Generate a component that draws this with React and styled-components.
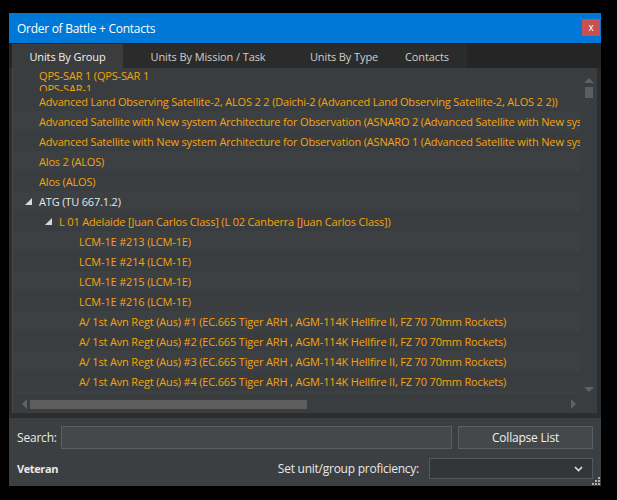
import React from "react";
import styled, { createGlobalStyle } from "styled-components";

const Global = createGlobalStyle`
  html, body { margin: 0; padding: 0; background: #000; }
  body { font-family: "Open Sans", "Noto Sans", sans-serif; }
`;

const Page = styled.div`
  width: 617px;
  height: 500px;
  padding: 13px 0 0 9px;
  box-sizing: border-box;
  background: #000;
`;

const Window = styled.div`
  position: relative;
  width: 592px;
  height: 473px;
  background: #2b2d2f;
  display: flex;
  flex-direction: column;
  font-family: "Open Sans", "Noto Sans", sans-serif;
  font-size: 11px;
`;

const TitleBar = styled.div`
  height: 30px;
  background: #0078d7;
  display: flex;
  align-items: center;
  justify-content: space-between;
  padding: 0 1px 0 8px;
  border-bottom: 1px solid #1e1e1e;
  color: #fff;
  font-size: 12px;
  letter-spacing: -0.28px;
`;

const CloseBtn = styled.div`
  width: 18px;
  height: 17px;
  background: #c75050;
  color: #fff;
  font-size: 10px;
  display: flex;
  align-items: center;
  justify-content: center;
  line-height: 1;
  margin-top: -2px;
  letter-spacing: 0;
`;

const TabStrip = styled.div`
  height: 24px;
  background: #252526;
  display: flex;
  padding-left: 3px;
`;

const Tab = styled.div`
  width: ${(p) => p.$w}px;
  display: flex;
  align-items: center;
  justify-content: center;
  background: ${(p) => (p.$active ? "#3a3c3e" : "#2b2b2b")};
  color: ${(p) => (p.$active ? "#f2f2f2" : "#cfcfcf")};
  font-size: 11px;
  letter-spacing: -0.1px;
  padding-right: ${(p) => p.$pr || 0}px;
  box-sizing: border-box;
`;

const Body = styled.div`
  padding: 0 4px 0 3px;
  height: 345px;
  display: flex;
`;

const ListPanel = styled.div`
  flex: 1;
  background: #3a3d40;
  border-left: 1px solid #484b4e;
  display: grid;
  grid-template-columns: 1fr 17px;
  grid-template-rows: 1fr 19px;
  overflow: hidden;
`;

const Viewport = styled.div`
  overflow: hidden;
  display: flex;
  flex-direction: column;
`;

const Row = styled.div`
  height: ${(p) => p.$h || 20}px;
  flex: none;
  display: flex;
  align-items: ${(p) => (p.$top ? "flex-start" : "center")};
  background: ${(p) => (p.$alt ? "#3d4043" : "#3a3d40")};
  padding-left: ${(p) => 26 + p.$level * 20}px;
  white-space: nowrap;
  overflow: hidden;
  color: ${(p) => (p.$white ? "#e6e6e6" : "#f5a30a")};
  font-size: 11px;
  letter-spacing: -0.17px;
`;

const Expander = styled.span`
  width: 14px;
  margin-left: -14px;
  display: inline-flex;
  align-items: center;
  justify-content: flex-start;
`;

const Label = styled.span`
  line-height: 13px;
`;

const TwoLine = styled.div`
  line-height: 13px;
  padding-top: 1px;
  white-space: nowrap;
`;

const VScroll = styled.div`
  display: flex;
  flex-direction: column;
  align-items: center;
  padding: 10px 0 0 0;
`;

const VThumb = styled.div`
  width: 8px;
  height: 11px;
  background: #5b5e61;
  margin-top: 4px;
`;

const Spacer = styled.div`
  flex: 1;
`;

const BottomPad = styled.div`
  height: 2px;
`;

const HScroll = styled.div`
  display: flex;
  align-items: center;
  padding: 1px 4px 0 9px;
  grid-column: 1 / 2;
`;

const HThumb = styled.div`
  width: 277px;
  height: 9px;
  background: #5d5d5d;
  margin-left: 3px;
`;

const Corner = styled.div``;

const Gap = styled.div`
  height: 5px;
  background: #2b2d2f;
`;

const BottomPanel = styled.div`
  flex: 1;
  background: #3c3f41;
  padding: 8px 8px 0 8px;
  display: flex;
  flex-direction: column;
  gap: 9px;
  color: #e8e8e8;
  font-size: 12px;
`;

const FormRow = styled.div`
  display: flex;
  align-items: center;
  height: ${(p) => p.$h}px;
`;

const FieldLabel = styled.span`
  width: 44px;
  font-size: 12px;
  letter-spacing: -0.2px;
`;

const Input = styled.div`
  width: 391px;
  height: 23px;
  box-sizing: border-box;
  background: #45484a;
  border: 1px solid #5c5f62;
`;

const Button = styled.div`
  margin-left: 6px;
  flex: 1;
  height: 23px;
  box-sizing: border-box;
  background: #45484a;
  border: 1px solid #5c5f62;
  display: flex;
  align-items: center;
  justify-content: center;
  color: #f0f0f0;
  font-size: 12px;
  letter-spacing: -0.2px;
`;

const Bold = styled.span`
  font-weight: 700;
  font-size: 11px;
  letter-spacing: -0.4px;
  flex: 1;
`;

const RightLabel = styled.span`
  margin-right: 10px;
  font-size: 12px;
  letter-spacing: -0.25px;
`;

const Select = styled.div`
  width: 164px;
  height: 21px;
  box-sizing: border-box;
  background: #333537;
  border: 1px solid #55585b;
  display: flex;
  align-items: center;
  justify-content: flex-end;
  padding-right: 9px;
`;

const Grip = styled.svg`
  position: absolute;
  right: 0;
  bottom: 0;
`;

const Tri = ({ dir, color = "#5f6265" }) => {
  const pts = {
    up: "0,5 5,0 10,5",
    down: "0,0 10,0 5,5",
    left: "5,0 5,10 0,5",
    right: "0,0 0,10 5,5",
  }[dir];
  const vertical = dir === "up" || dir === "down";
  return (
    <svg width={vertical ? 10 : 5} height={vertical ? 5 : 10}>
      <polygon points={pts} fill={color} />
    </svg>
  );
};

const ExpandIcon = () => (
  <Expander>
    <svg width="7" height="7">
      <polygon points="7,0 7,7 0,7" fill="#d8d8d8" />
    </svg>
  </Expander>
);

const rows = [
  { t: "Advanced Land Observing Satellite-2, ALOS 2 2 (Daichi-2 (Advanced Land Observing Satellite-2, ALOS 2 2))", l: 0 },
  { t: "Advanced Satellite with New system Architecture for Observation (ASNARO 2 (Advanced Satellite with New system Architecture for Observation))", l: 0 },
  { t: "Advanced Satellite with New system Architecture for Observation (ASNARO 1 (Advanced Satellite with New system Architecture for Observation))", l: 0 },
  { t: "Alos 2 (ALOS)", l: 0 },
  { t: "Alos (ALOS)", l: 0 },
  { t: "ATG (TU 667.1.2)", l: 0, exp: true, white: true },
  { t: "L 01 Adelaide [Juan Carlos Class] (L 02 Canberra [Juan Carlos Class])", l: 1, exp: true },
  { t: "LCM-1E #213 (LCM-1E)", l: 2 },
  { t: "LCM-1E #214 (LCM-1E)", l: 2 },
  { t: "LCM-1E #215 (LCM-1E)", l: 2 },
  { t: "LCM-1E #216 (LCM-1E)", l: 2 },
  { t: "A/ 1st Avn Regt (Aus) #1 (EC.665 Tiger ARH , AGM-114K Hellfire II, FZ 70 70mm Rockets)", l: 2 },
  { t: "A/ 1st Avn Regt (Aus) #2 (EC.665 Tiger ARH , AGM-114K Hellfire II, FZ 70 70mm Rockets)", l: 2 },
  { t: "A/ 1st Avn Regt (Aus) #3 (EC.665 Tiger ARH , AGM-114K Hellfire II, FZ 70 70mm Rockets)", l: 2 },
  { t: "A/ 1st Avn Regt (Aus) #4 (EC.665 Tiger ARH , AGM-114K Hellfire II, FZ 70 70mm Rockets)", l: 2 },
  { t: "", l: 2 },
];

export default function App() {
  return (
    <>
      <Global />
      <Page>
        <Window>
          <TitleBar>
            <span>Order of Battle + Contacts</span>
            <CloseBtn>x</CloseBtn>
          </TitleBar>
          <TabStrip>
            <Tab $w={111} $active>Units By Group</Tab>
            <Tab $w={170}>Units By Mission / Task</Tab>
            <Tab $w={102}>Units By Type</Tab>
            <Tab $w={72} $pr={8}>Contacts</Tab>
          </TabStrip>
          <Body>
            <ListPanel>
              <Viewport>
                <Row $h={23} $level={0} $top>
                  <TwoLine>
                    QPS-SAR 1 (QPS-SAR 1
                    <br />
                    QPS-SAR-1
                  </TwoLine>
                </Row>
                {rows.map((r, i) => (
                  <Row key={i} $level={r.l} $alt={i % 2 === 1} $white={r.white}>
                    {r.exp && <ExpandIcon />}
                    <Label>{r.t}</Label>
                  </Row>
                ))}
              </Viewport>
              <VScroll>
                <Tri dir="up" />
                <VThumb />
                <Spacer />
                <Tri dir="down" />
                <BottomPad />
              </VScroll>
              <HScroll>
                <Tri dir="left" />
                <HThumb />
                <Spacer />
                <Tri dir="right" />
              </HScroll>
              <Corner />
            </ListPanel>
          </Body>
          <Gap />
          <BottomPanel>
            <FormRow $h={23}>
              <FieldLabel>Search:</FieldLabel>
              <Input />
              <Button>Collapse List</Button>
            </FormRow>
            <FormRow $h={21}>
              <Bold>Veteran</Bold>
              <RightLabel>Set unit/group proficiency:</RightLabel>
              <Select>
                <svg width="9" height="6">
                  <polyline points="1,1 4.5,4.5 8,1" fill="none" stroke="#e0e0e0" strokeWidth="1.6" />
                </svg>
              </Select>
            </FormRow>
          </BottomPanel>
          <Grip width="10" height="10">
            {[[7, 1], [4, 4], [7, 4], [1, 7], [4, 7], [7, 7]].map(([x, y], i) => (
              <rect key={i} x={x} y={y} width="2" height="2" fill="#b0b0b0" />
            ))}
          </Grip>
        </Window>
      </Page>
    </>
  );
}
